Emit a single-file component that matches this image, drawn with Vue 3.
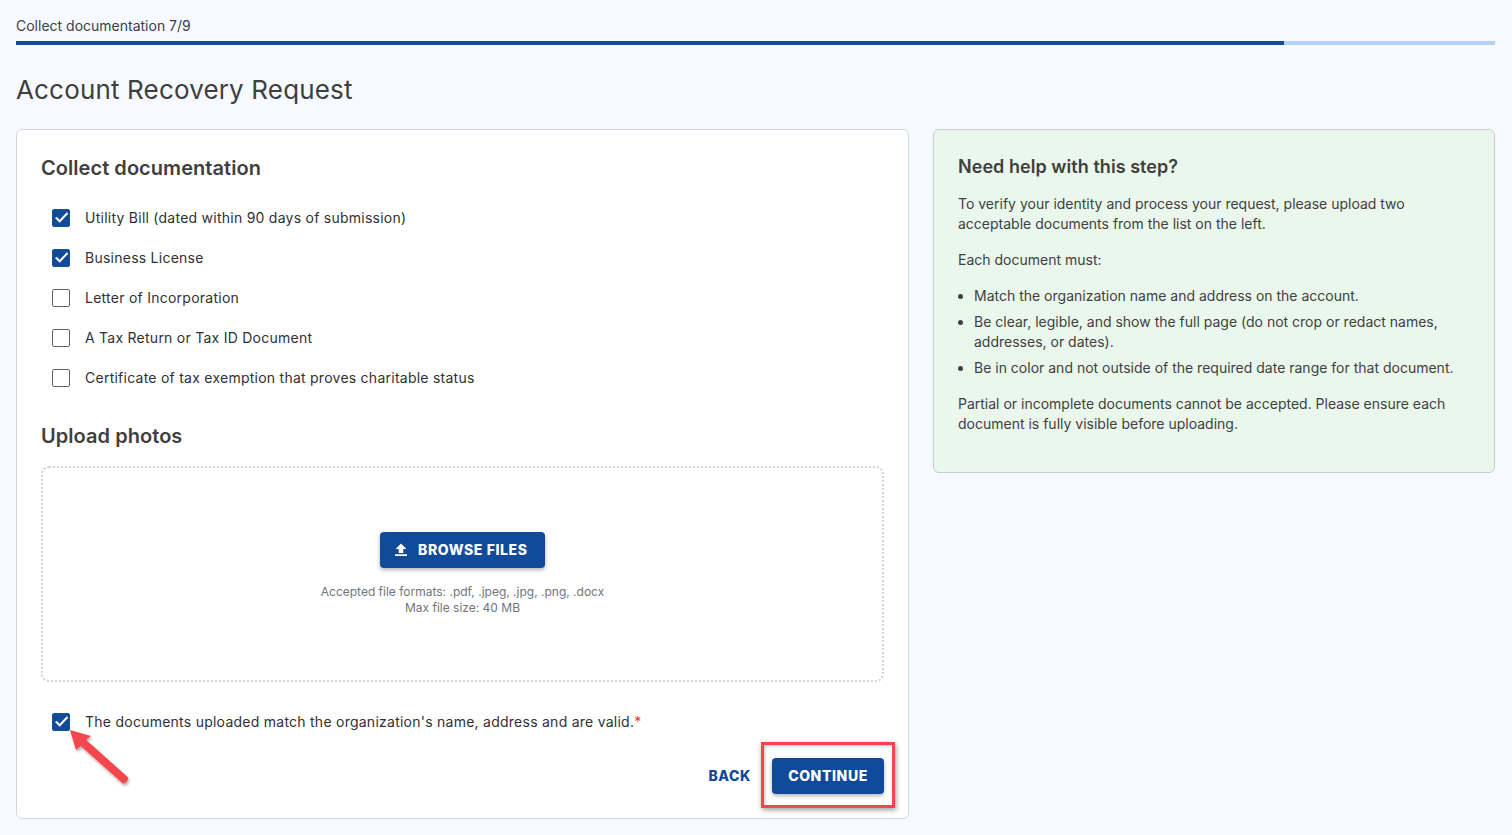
<script setup>
const docs = [
  { label: 'Utility Bill (dated within 90 days of submission)', checked: true },
  { label: 'Business License', checked: true },
  { label: 'Letter of Incorporation', checked: false },
  { label: 'A Tax Return or Tax ID Document', checked: false },
  { label: 'Certificate of tax exemption that proves charitable status', checked: false },
]
</script>

<template>
  <div class="page">
    <div class="step">Collect documentation 7/9</div>
    <div class="track"><div class="fill" :style="{ width: '85.75%' }"></div></div>
    <h1 class="title">Account Recovery Request</h1>
    <div class="columns">
      <section class="card">
        <h2 class="heading">Collect documentation</h2>
        <ul class="checks">
          <li v-for="d in docs" :key="d.label" class="row">
            <span class="box" :class="{ on: d.checked }">
              <svg v-if="d.checked" width="15" height="15" viewBox="0 0 15 15"><path d="M1.800 7.500l3.900 3.800 7.800-8.300" fill="none" stroke="#fff" stroke-width="2"/></svg>
            </span>
            <span class="label">{{ d.label }}</span>
          </li>
        </ul>
        <h2 class="heading upload">Upload photos</h2>
        <div class="drop">
          <button class="btn browse">
            <svg width="14" height="14" viewBox="0 0 14 14"><path d="M7 .5L1.500 6h3.200v4h4.600V6h3.200zM1 11.200h12V13H1z" fill="#fff"/></svg>
            BROWSE FILES
          </button>
          <p class="hint">Accepted file formats: .pdf, .jpeg, .jpg, .png, .docx<br>Max file size: 40 MB</p>
        </div>
        <div class="row confirm">
          <span class="box on">
            <svg width="15" height="15" viewBox="0 0 15 15"><path d="M1.800 7.500l3.900 3.800 7.800-8.300" fill="none" stroke="#fff" stroke-width="2"/></svg>
          </span>
          <span class="label">The documents uploaded match the organization's name, address and are valid.<span class="req">*</span></span>
          <svg class="arrow" width="70" height="70" viewBox="0 0 70 70">
            <defs><filter id="sh" x="-20%" y="-20%" width="150%" height="150%"><feDropShadow dx="1" dy="2" stdDeviation="1.500" flood-color="#000" flood-opacity=".35"/></filter></defs>
            <g filter="url(#sh)"><path d="M6 1L27 7L22.200 11L63.700 48Q65 52 61 54Q59.500 55 58.300 54L16.800 17L12 21Z" fill="#f4474d"/></g>
          </svg>
        </div>
        <div class="actions">
          <a class="back">BACK</a>
          <div class="highlight">
            <button class="btn cont">CONTINUE</button>
          </div>
        </div>
      </section>
      <aside class="help">
        <h3 class="help-title">Need help with this step?</h3>
        <p>To verify your identity and process your request, please upload two acceptable documents from the list on the left.</p>
        <p>Each document must:</p>
        <ul>
          <li>Match the organization name and address on the account.</li>
          <li>Be clear, legible, and show the full page (do not crop or redact names, addresses, or dates).</li>
          <li>Be in color and not outside of the required date range for that document.</li>
        </ul>
        <p>Partial or incomplete documents cannot be accepted. Please ensure each document is fully visible before uploading.</p>
      </aside>
    </div>
  </div>
</template>

<style>
html, body { margin: 0; background: #f6faff; }
</style>

<style scoped>
.page {
  box-sizing: border-box;
  height: 835px;
  overflow: hidden;
  padding: 16px 17px 0 16px;
  font-family: Inter, "Liberation Sans", sans-serif;
  color: #3f3f3f;
  background: #f6faff;
}
.step { font-size: 14px; line-height: 19px; }
.track { height: 4px; margin-top: 6px; background: #b5d0f5; }
.fill { height: 100%; background: #114a9a; }
.title { margin: 26px 0 0; font-size: 26px; letter-spacing: .16px; line-height: 38px; font-weight: 400; }
.columns { display: flex; gap: 24px; align-items: flex-start; margin-top: 20px; }
.card {
  box-sizing: border-box;
  width: 893px;
  height: 690px;
  padding: 23px 24px 0;
  background: #fff;
  border: 1px solid #d3d8e0;
  border-radius: 6px;
}
.heading { margin: 0; font-size: 20px; letter-spacing: .05px; line-height: 30px; font-weight: 600; }
.checks { list-style: none; margin: 14px 0 0; padding: 0; }
.row { display: flex; align-items: center; gap: 15px; height: 40px; padding-left: 11px; position: relative; }
.box {
  box-sizing: border-box;
  width: 18px;
  height: 18px;
  margin-top: 1px;
  border: 1.5px solid #5f6368;
  border-radius: 2px;
  display: flex;
  align-items: center;
  justify-content: center;
  background: #fff;
}
.box.on { background: #114a9a; border-color: #0e5a80; }
.label { font-size: 14px; letter-spacing: .25px; color: #2f3136; }
.req { color: #e0392f; }
.upload { margin-top: 24px; }
.drop {
  box-sizing: border-box;
  height: 216px;
  margin-top: 15px;
  border: 2px dotted #d0d3d8;
  border-radius: 8px;
  display: flex;
  flex-direction: column;
  align-items: center;
  padding-top: 64px;
}
.btn {
  border: 0;
  border-radius: 4px;
  background: #114a9a;
  color: #fff;
  font-family: inherit;
  font-size: 14px;
  font-weight: 800;
  letter-spacing: .6px;
  height: 36px;
  padding-bottom: 2px;
  box-shadow: 0 2px 4px rgba(0, 0, 0, .3);
}
.browse { display: flex; align-items: center; gap: 10px; padding: 0 16px 2px 14px; width: 165px; white-space: nowrap; }
.browse svg { margin-top: 2px; }
.hint { margin: 16px 0 0; font-size: 12px; line-height: 16px; color: #70757d; text-align: center; }
.confirm { margin-top: 19px; }
.arrow { position: absolute; left: 23px; top: 28px; }
.actions { display: flex; justify-content: flex-end; align-items: center; margin-top: 1px; }
.back { color: #114a9a; font-size: 14px; font-weight: 800; letter-spacing: .6px; margin-right: 10px; }
.highlight {
  box-sizing: border-box;
  width: 134px;
  height: 66px;
  margin-right: -11px;
  border: 3px solid #f4474d;
  box-shadow: 1px 2px 5px rgba(0, 0, 0, .4), inset 1px 1px 3px rgba(0, 0, 0, .25);
  display: flex;
  align-items: center;
  justify-content: center;
}
.cont { width: 112px; margin-top: 2px; }
.help {
  box-sizing: border-box;
  width: 562px;
  height: 344px;
  padding: 24px 24px 0;
  background: #eaf7ec;
  border: 1px solid #c9cdc9;
  border-radius: 6px;
  font-size: 14px;
  line-height: 20px;
}
.help-title { margin: 0 0 14px; font-size: 18px; letter-spacing: .05px; line-height: 26px; font-weight: 600; }
.help p { margin: 0 0 16px; }
.help ul { margin: 0 0 16px; padding-left: 16px; }
.help li { margin-bottom: 6px; }
.help li:last-child { margin-bottom: 0; }
</style>
